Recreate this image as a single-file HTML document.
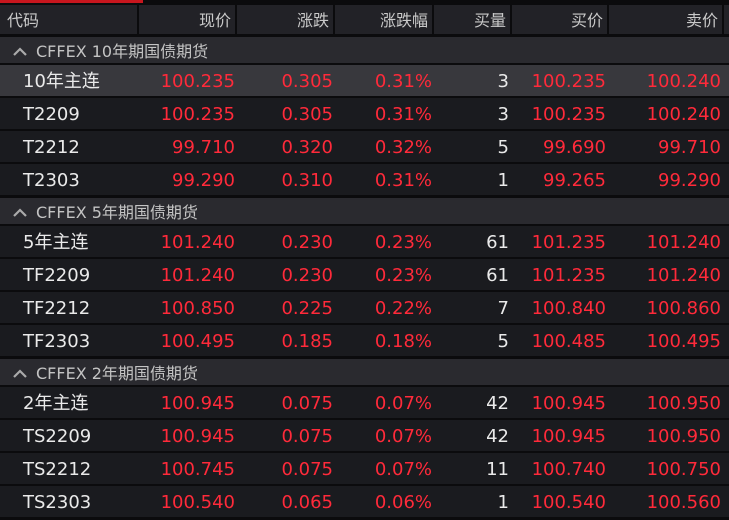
<!DOCTYPE html>
<html><head><meta charset="utf-8"><style>
*{margin:0;padding:0;box-sizing:border-box}
body{width:729px;height:514px;background:#0b0b0d;overflow:hidden;font-family:"DejaVu Sans","Noto Sans CJK SC",sans-serif;position:relative}
.top{position:absolute;left:0;top:0;width:143px;height:3px;background:#c8161e}
.hdr{position:absolute;top:5px;height:29px;left:0;width:729px;background:#222227}
.hc{position:absolute;top:0;height:29px;line-height:31px;font-size:16px;color:#c9c9c9;text-align:right;border-right:2px solid #0b0b0d;padding-right:4px}
.grp{position:absolute;left:0;width:729px;height:26px;background:#2a2a2f;color:#c4c4c4;font-size:16px;line-height:29px;padding-left:36px}
.grp svg{position:absolute;left:12px;top:10px}
.row{position:absolute;left:0;width:729px;height:31px;background:#1a1b1f;font-size:18px;line-height:34px}
.row.hl{background:#38383d}
.row span{position:absolute;top:0;color:#ff2a3a;text-align:right}
.row span.n{left:23px;color:#eaeaea;text-align:left}
.row span.q{color:#eaeaea}
</style></head><body>
<div class="top"></div>
<div class="hdr">
<div class="hc" style="left:0;width:139px;text-align:left;padding-left:7px">代码</div>
<div class="hc" style="left:139px;width:98px">现价</div>
<div class="hc" style="left:237px;width:98px">涨跌</div>
<div class="hc" style="left:335px;width:99px">涨跌幅</div>
<div class="hc" style="left:434px;width:78px">买量</div>
<div class="hc" style="left:512px;width:97px">买价</div>
<div class="hc" style="left:609px;width:115px">卖价</div>
</div>
<div id="c"></div>
<script>
var g=[["CFFEX 10年期国债期货",37,[["10年主连","100.235","0.305","0.31%","3","100.235","100.240"],["T2209","100.235","0.305","0.31%","3","100.235","100.240"],["T2212","99.710","0.320","0.32%","5","99.690","99.710"],["T2303","99.290","0.310","0.31%","1","99.265","99.290"]]],
["CFFEX 5年期国债期货",198,[["5年主连","101.240","0.230","0.23%","61","101.235","101.240"],["TF2209","101.240","0.230","0.23%","61","101.235","101.240"],["TF2212","100.850","0.225","0.22%","7","100.840","100.860"],["TF2303","100.495","0.185","0.18%","5","100.485","100.495"]]],
["CFFEX 2年期国债期货",359,[["2年主连","100.945","0.075","0.07%","42","100.945","100.950"],["TS2209","100.945","0.075","0.07%","42","100.945","100.950"],["TS2212","100.745","0.075","0.07%","11","100.740","100.750"],["TS2303","100.540","0.065","0.06%","1","100.540","100.560"]]]];
var R=[235,333,432,509,606,721],h="";
g.forEach(function(G,gi){h+='<div class="grp" style="top:'+G[1]+'px"><svg width="16" height="9"><path d="M2 8L8 2l6 6" fill="none" stroke="#aaa" stroke-width="2.2"/></svg>'+G[0]+'</div>';
G[2].forEach(function(r,i){var y=G[1]+28+i*33;h+='<div class="row'+(gi==0&&i==0?' hl':'')+'" style="top:'+y+'px"><span class="n">'+r[0]+'</span>';
for(var k=1;k<7;k++)h+='<span class="'+(k==4?'q':'')+'" style="right:'+(729-R[k-1])+'px">'+r[k]+'</span>';h+='</div>';});});
document.getElementById('c').innerHTML=h;
</script>
</body></html>
